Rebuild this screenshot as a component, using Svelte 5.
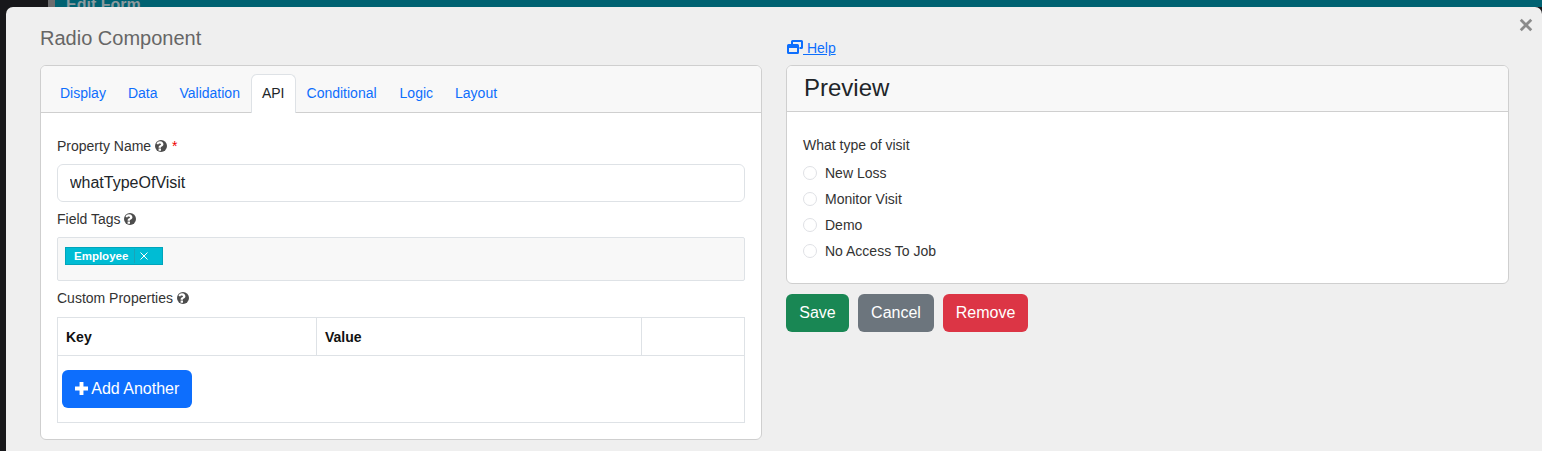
<script>
  const tabs = ["Display", "Data", "Validation", "API", "Conditional", "Logic", "Layout"];
  const options = ["New Loss", "Monitor Visit", "Demo", "No Access To Job"];
  const questionMark = "M896 1376v-192q0-14-9-23t-23-9h-192q-14 0-23 9t-9 23v192q0 14 9 23t23 9h192q14 0 23-9t9-23zm256-672q0-88-55.5-163t-138.5-116-170-41q-243 0-371 213-15 24 8 42l132 100q7 6 19 6 16 0 25-12 53-68 86-92 34-24 86-24 48 0 85.5 26t37.5 59q0 38-20 61t-68 45q-63 28-115.5 86.5t-52.5 125.5v36q0 14 9 23t23 9h192q14 0 23-9t9-23q0-19 21.5-49.5t54.5-49.5q32-18 49-28.5t46-35 44.5-48 28-60.5 12.5-81z";
</script>

{#snippet hint()}
  <svg class="hint" viewBox="256 256 1280 1280" aria-hidden="true">
    <circle cx="896" cy="896" r="640" />
    <path d={questionMark} />
  </svg>
{/snippet}

<div class="page">
  <div class="backdrop">
    <div class="dark"></div>
    <div class="rail"></div>
    <div class="bar"><span>Edit Form</span></div>
  </div>

  <div class="modal">
    <button class="close" aria-label="Close">
      <svg viewBox="0 0 12 12"><path d="M1.5 1.5l9 9M10.5 1.5l-9 9" /></svg>
    </button>
    <div class="columns">
      <div class="left">
        <h4 class="title">Radio Component</h4>
        <div class="card">
          <ul class="tabs">
            {#each tabs as tab}
              <li class:active={tab === "API"} class:wide={tab === "Conditional"}>{tab}</li>
            {/each}
          </ul>
          <div class="card-body form">
            <div class="label first">Property Name {@render hint()} <span class="req">*</span></div>
            <input class="text" type="text" value="whatTypeOfVisit" />
            <div class="label tags-label">Field Tags {@render hint()}</div>
            <div class="tags">
              <span class="chip"><b>Employee</b><i></i>
                <svg viewBox="0 0 8 8"><path d="M0.5 0.5l7 7M7.5 0.5l-7 7" /></svg>
              </span>
            </div>
            <div class="label props-label">Custom Properties {@render hint()}</div>
            <table>
              <thead>
                <tr><th class="k">Key</th><th class="v">Value</th><th></th></tr>
              </thead>
              <tbody>
                <tr>
                  <td colspan="3" class="add-cell">
                    <button class="btn blue">
                      <svg class="plus" viewBox="1 1 12 12"><path d="M5.200 1h3.600v4.200H13v3.600H8.800V13H5.200V8.800H1V5.200h4.200z" /></svg>
                      Add Another
                    </button>
                  </td>
                </tr>
              </tbody>
            </table>
          </div>
        </div>
      </div>

      <div class="right">
        <a class="help" href="#help">
          <svg viewBox="0 0 16 14" aria-hidden="true">
            <path fill-rule="evenodd" d="M5.500 0H14.500A1.500 1.500 0 0 1 16 1.500V7.500A1.500 1.500 0 0 1 14.500 9H12.500V7H14V2H6V4H4V1.500A1.500 1.500 0 0 1 5.500 0z" />
            <path fill-rule="evenodd" d="M1.500 4H10.500A1.500 1.500 0 0 1 12 5.500V12.500A1.500 1.500 0 0 1 10.500 14H1.500A1.500 1.500 0 0 1 0 12.500V5.500A1.500 1.500 0 0 1 1.500 4zM2 8V12H10V8z" />
          </svg><span>&nbsp;Help</span>
        </a>
        <div class="card">
          <div class="preview-head">Preview</div>
          <div class="card-body preview">
            <div class="question">What type of visit</div>
            {#each options as option}
              <label class="option">
                <input type="radio" name="visit" />
                <span>{option}</span>
              </label>
            {/each}
          </div>
        </div>
        <div class="actions">
          <button class="btn green">Save</button>
          <button class="btn gray">Cancel</button>
          <button class="btn red">Remove</button>
        </div>
      </div>
    </div>
  </div>
</div>

<style>
  :global(body) {
    margin: 0;
    background: #18181b;
    font-family: "Liberation Sans", Arial, sans-serif;
    font-size: 14px;
    color: #333;
  }

  .page {
    height: 451px;
    overflow: hidden;
    display: flex;
    flex-direction: column;
  }

  .backdrop {
    height: 7px;
    flex: none;
    display: flex;
    overflow: hidden;
  }

  .dark {
    width: 48px;
  }

  .rail {
    width: 7px;
    background: #6c6c6e;
  }

  .bar {
    flex: 1;
    background: #006272;
    padding-left: 11px;
  }

  .bar span {
    display: block;
    margin-top: -5px;
    line-height: 20px;
    font-size: 16px;
    font-weight: bold;
    color: #8c9a9e;
  }

  .modal {
    flex: 1;
    margin-left: 6px;
    background: #efefef;
    border-radius: 7px 7px 0 0;
    position: relative;
    padding: 0 33px 0 34px;
  }

  .close {
    position: absolute;
    top: 11px;
    right: 9px;
    width: 14px;
    height: 14px;
    padding: 0;
    border: 0;
    background: none;
  }

  .close svg {
    display: block;
    width: 14px;
    height: 14px;
  }

  .close path {
    stroke: #8a8a8a;
    stroke-width: 2.4;
    fill: none;
  }

  .columns {
    display: grid;
    grid-template-columns: 722px 723px;
    column-gap: 24px;
  }

  .title {
    margin: 0;
    padding-top: 19px;
    height: 39px;
    font-size: 20px;
    line-height: 24px;
    font-weight: normal;
    color: #666;
  }

  .card {
    background: #fff;
    border: 1px solid #cfcfcf;
    border-radius: 6px;
    overflow: hidden;
  }

  .tabs {
    list-style: none;
    margin: 0;
    padding: 8px 8px 0 8px;
    height: 38px;
    display: flex;
    background: #f8f8f8;
    border-bottom: 1px solid #cfcfcf;
  }

  .tabs li {
    padding: 0 10px;
    height: 38px;
    line-height: 36px;
    color: #0d6efd;
    border: 1px solid transparent;
    border-bottom: 0;
    border-radius: 6px 6px 0 0;
  }

  .tabs li.wide {
    padding-right: 11px;
  }

  .tabs li.active {
    height: 38px;
    background: #fff;
    color: #212529;
    border-color: #dee2e6;
  }

  .form {
    padding: 0 16px 16px;
  }

  .label {
    line-height: 20px;
    color: #333;
    white-space: nowrap;
  }

  .first {
    padding-top: 23px;
    padding-bottom: 8px;
  }

  .tags-label {
    padding-top: 7px;
    padding-bottom: 8px;
  }

  .props-label {
    padding-top: 7px;
    padding-bottom: 9px;
  }

  .hint {
    width: 12px;
    height: 12px;
    vertical-align: -1px;
  }

  .hint circle {
    fill: #4d4d4d;
  }

  .hint path {
    fill: #fff;
  }

  .req {
    color: #e00;
    margin-left: 1px;
  }

  .text {
    display: block;
    width: 100%;
    height: 38px;
    box-sizing: border-box;
    padding: 0 12px;
    border: 1px solid #dee2e6;
    border-radius: 6px;
    font: 16px "Liberation Sans", Arial, sans-serif;
    color: #212529;
    background: #fff;
  }

  .tags {
    height: 44px;
    box-sizing: border-box;
    padding: 9px 7px;
    background: #f8f8f8;
    border: 1px solid #dee2e6;
    border-radius: 2px;
  }

  .chip {
    display: inline-flex;
    align-items: center;
    width: 98px;
    height: 18px;
    box-sizing: border-box;
    background: #00bcd4;
    border: 1px solid #00a5bb;
    color: #fff;
    padding-left: 8px;
  }

  .chip b {
    font-size: 11.5px;
    line-height: 16px;
  }

  .chip i {
    width: 1px;
    height: 14px;
    background: #1aa3b8;
    margin-left: 6px;
  }

  .chip svg {
    width: 8px;
    height: 8px;
    margin-left: 5px;
  }

  .chip path {
    stroke: #fff;
    stroke-width: 1;
    fill: none;
  }

  table {
    width: 100%;
    table-layout: fixed;
    border-collapse: collapse;
    background: #fff;
  }

  th,
  td {
    border: 1px solid #dee2e6;
    padding: 0;
  }

  th {
    height: 37px;
    padding-left: 8px;
    text-align: left;
    font-size: 14px;
    color: #111;
  }

  th.k {
    width: 250px;
  }

  th.v {
    width: 316px;
  }

  .add-cell {
    height: 66px;
    padding-left: 4px;
  }

  .btn {
    height: 38px;
    padding: 0 12px;
    border: 0;
    border-radius: 6px;
    font: 16px "Liberation Sans", Arial, sans-serif;
    color: #fff;
  }

  .blue {
    background: #0d6efd;
    display: block;
    width: 130px;
    white-space: nowrap;
  }

  .plus {
    width: 13px;
    height: 13px;
    vertical-align: -1px;
  }

  .plus path {
    fill: #fff;
  }

  .green {
    background: #198754;
    width: 63px;
    padding: 0;
  }

  .gray {
    background: #6c757d;
    width: 76px;
    padding: 0;
  }

  .red {
    background: #dc3545;
    width: 85px;
    padding: 0;
  }

  .help {
    display: block;
    margin-top: 32px;
    height: 26px;
    padding-left: 1px;
    line-height: 18px;
    color: #0d6efd;
    text-decoration: none;
    white-space: nowrap;
  }

  .help svg {
    width: 16px;
    height: 14px;
    vertical-align: -1px;
    fill: #0d6efd;
  }

  .help span {
    text-decoration: underline;
  }

  .preview-head {
    height: 45px;
    line-height: 44px;
    padding-left: 17px;
    font-size: 24px;
    color: #212529;
    background: #f8f8f8;
    border-bottom: 1px solid #cfcfcf;
  }

  .preview {
    padding: 23px 16px 19px;
    height: 171px;
    box-sizing: border-box;
  }

  .question {
    line-height: 20px;
    margin-bottom: 5px;
  }

  .option {
    display: flex;
    align-items: center;
    height: 26px;
  }

  .option input {
    appearance: none;
    width: 14px;
    height: 14px;
    margin: 0 8px 0 0;
    border: 1px solid #dfe1e5;
    border-radius: 50%;
    background: #fff;
  }

  .actions {
    display: flex;
    gap: 9px;
    margin-top: 10px;
  }
</style>
